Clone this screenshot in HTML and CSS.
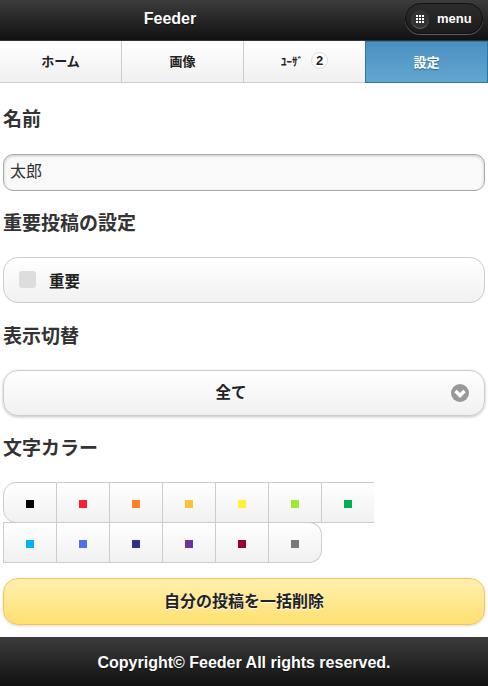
FILE: index.html
```html
<!DOCTYPE html>
<html lang="ja">
<head>
  <meta charset="UTF-8">
  <meta name="viewport" content="width=device-width, initial-scale=1.0">
  <title>Feeder</title>
  <link rel="stylesheet" href="styles.css">
</head>
<body>
  <!-- ヘッダー -->
  <header class="header">
    <h1>Feeder</h1>
    <a class="menu-button">
      <span class="menu-icon">
        <svg width="8" height="8" viewBox="0 0 8 8" fill="#fff">
          <rect x="0" y="0" width="2" height="2"/><rect x="3" y="0" width="2" height="2"/><rect x="6" y="0" width="2" height="2"/>
          <rect x="0" y="3" width="2" height="2"/><rect x="3" y="3" width="2" height="2"/><rect x="6" y="3" width="2" height="2"/>
          <rect x="0" y="6" width="2" height="2"/><rect x="3" y="6" width="2" height="2"/><rect x="6" y="6" width="2" height="2"/>
        </svg>
      </span>
      menu
    </a>
  </header>

  <!-- タブ -->
  <nav class="tabs">
    <a class="tab">ホーム</a>
    <a class="tab">画像</a>
    <a class="tab"><span class="tab-narrow">ﾕｰｻﾞ</span><span class="count">2</span></a>
    <a class="tab active">設定</a>
  </nav>

  <main class="content">
    <h3 class="title title-first">名前</h3>
    <input class="text-input" type="text" value="太郎">

    <h3 class="title title-check">重要投稿の設定</h3>
    <label class="check-row">
      <span class="check-box"></span>
      重要
    </label>

    <h3 class="title title-select">表示切替</h3>
    <div class="select-button">
      <span>全て</span>
      <span class="select-icon">
        <svg width="18" height="18" viewBox="0 0 18 18">
          <circle cx="9" cy="9" r="9" fill="#999"/>
          <path d="M4.5 7 L9 11.5 L13.5 7" fill="none" stroke="#fff" stroke-width="3.5"/>
        </svg>
      </span>
    </div>

    <h3 class="title title-color">文字カラー</h3>
    <div class="colors">
      <div class="color-cell first"><span class="swatch c-black"></span></div>
      <div class="color-cell"><span class="swatch c-red"></span></div>
      <div class="color-cell"><span class="swatch c-orange"></span></div>
      <div class="color-cell"><span class="swatch c-amber"></span></div>
      <div class="color-cell"><span class="swatch c-yellow"></span></div>
      <div class="color-cell"><span class="swatch c-lime"></span></div>
      <div class="color-cell"><span class="swatch c-green"></span></div>
      <div class="color-cell"><span class="swatch c-sky"></span></div>
      <div class="color-cell"><span class="swatch c-blue"></span></div>
      <div class="color-cell"><span class="swatch c-navy"></span></div>
      <div class="color-cell"><span class="swatch c-purple"></span></div>
      <div class="color-cell"><span class="swatch c-wine"></span></div>
      <div class="color-cell last"><span class="swatch c-gray"></span></div>
    </div>

    <button class="delete-button">自分の投稿を一括削除</button>
  </main>

  <footer class="footer">Copyright© Feeder All rights reserved.</footer>
</body>
</html>
```

FILE: styles.css
```css
* {
  box-sizing: border-box;
}

body {
  font-family: "Liberation Sans", "Noto Sans CJK JP", sans-serif;
  margin: 0;
  background-color: white;
  color: #333;
}

/* ヘッダー */
.header {
  position: relative;
  height: 41px;
  background: linear-gradient(#3c3c3c, #111);
  border-bottom: 1px solid #333;
  text-align: center;
}

.header h1 {
  margin: 0;
  padding-right: 148px;
  font-size: 16px;
  line-height: 37px;
  color: white;
  text-shadow: 0 1px 1px #111;
}

.menu-button {
  position: absolute;
  top: 3px;
  right: 5px;
  width: 78px;
  height: 31px;
  display: flex;
  align-items: center;
  padding-left: 5px;
  gap: 8px;
  border: 1px solid #111;
  border-radius: 16px;
  background: linear-gradient(#2c2c2c, #1c1c1c);
  box-shadow: 0 1px 0 rgba(255,255,255,0.3);
  color: white;
  font-size: 13px;
  font-weight: bold;
}

.menu-icon {
  width: 18px;
  height: 18px;
  border-radius: 50%;
  background-color: #333;
  box-shadow: 0 1px 0 rgba(255,255,255,0.3);
  display: flex;
  align-items: center;
  justify-content: center;
}

/* タブ */
.tabs {
  display: grid;
  grid-template-columns: 122px 122px 122px 122px;
  height: 42px;
}

.tab {
  display: flex;
  align-items: center;
  justify-content: center;
  padding-bottom: 2px;
  border-right: 1px solid #ccc;
  border-bottom: 1px solid #ccc;
  background: linear-gradient(#fff, #f0f0f0);
  color: #222;
  font-size: 13px;
  font-weight: bold;
}

.tab.active {
  margin-left: -1px;
  border: 1px solid #2a77a8;
  background: linear-gradient(#4a90bf, #63a6d2);
  color: white;
  text-shadow: 0 1px 1px #2a6a94;
}

.tab-narrow {
  font-size: 11px;
}

.count {
  width: 17px;
  height: 17px;
  margin-left: 8px;
  border-radius: 50%;
  border: 1px solid #ddd;
  background-color: white;
  text-align: center;
  line-height: 15px;
  font-size: 13px;
}

/* フォーム */
.content {
  padding: 0 3px;
}

.title {
  margin: 0;
  font-size: 19px;
  line-height: 26px;
  color: #333;
}

.title-first {
  padding-top: 24px;
  margin-bottom: 21px;
}

.title-check {
  margin-top: 20px;
  margin-bottom: 20px;
}

.title-select {
  margin-top: 21px;
  margin-bottom: 20px;
}

.title-color {
  margin-top: 20px;
  margin-bottom: 20px;
}

.text-input {
  display: block;
  width: 100%;
  height: 37px;
  padding: 0 6px 5px;
  border: 1px solid #aaa;
  border-radius: 10px;
  background-color: #f9f9f9;
  box-shadow: inset 0 1px 3px rgba(0,0,0,0.2);
  font-family: inherit;
  font-size: 16px;
  color: #333;
}

.check-row {
  display: flex;
  align-items: center;
  height: 46px;
  padding-left: 15px;
  padding-bottom: 1px;
  gap: 13px;
  border: 1px solid #ccc;
  border-radius: 15px;
  background: linear-gradient(#fff, #f1f1f1);
  color: #222;
  font-size: 15.5px;
  font-weight: bold;
}

.check-box {
  width: 17px;
  height: 17px;
  border-radius: 3px;
  background-color: #ddd;
}

.select-button {
  position: relative;
  height: 46px;
  line-height: 44px;
  text-align: center;
  padding-right: 26px;
  border: 1px solid #ccc;
  border-radius: 15px;
  background: linear-gradient(#fff, #f1f1f1);
  box-shadow: 0 1px 3px rgba(0,0,0,0.25);
  color: #222;
  font-size: 15.5px;
  font-weight: bold;
}

.select-icon {
  position: absolute;
  top: 13px;
  right: 15px;
  width: 18px;
  height: 18px;
  line-height: 0;
}

/* 文字カラー */
.colors {
  display: grid;
  grid-template-columns: 54px repeat(5, 53px) 52px;
  grid-auto-rows: 40px;
}

.color-cell {
  display: flex;
  align-items: center;
  justify-content: center;
  height: 41px;
  padding-top: 3px;
  border: 1px solid #ccc;
  border-left: none;
  background: linear-gradient(#fff, #f1f1f1);
}

.color-cell:nth-child(7) {
  border-right: none;
}

.color-cell:nth-child(7n+1) {
  border-left: 1px solid #ccc;
}

.color-cell.first {
  border-radius: 13px 0 0 13px;
}

.color-cell.last {
  border-radius: 0 13px 13px 0;
}

.swatch {
  width: 8px;
  height: 8px;
}

.c-black { background-color: #000; }
.c-red { background-color: #ff1f35; }
.c-orange { background-color: #ff7f27; }
.c-amber { background-color: #ffc133; }
.c-yellow { background-color: #fff133; }
.c-lime { background-color: #9ee83a; }
.c-green { background-color: #00b04f; }
.c-sky { background-color: #00b6f0; }
.c-blue { background-color: #4f6ff0; }
.c-navy { background-color: #2f3090; }
.c-purple { background-color: #72309a; }
.c-wine { background-color: #a00030; }
.c-gray { background-color: #7a7a7a; }

/* 削除ボタン */
.delete-button {
  display: block;
  width: 100%;
  height: 47px;
  margin-top: 16px;
  padding-bottom: 5px;
  border: 1px solid #f5c453;
  border-radius: 15px;
  background: linear-gradient(#fff0b0, #ffe070);
  box-shadow: 0 1px 3px rgba(0,0,0,0.15);
  font-family: inherit;
  font-size: 16px;
  font-weight: bold;
  color: #222;
  text-shadow: 0 1px 1px white;
}

/* フッター */
.footer {
  margin-top: 12px;
  height: 49px;
  line-height: 51px;
  text-align: center;
  background: linear-gradient(#3c3c3c, #111);
  color: white;
  font-size: 16px;
  font-weight: bold;
  text-shadow: 0 1px 1px #111;
}
```
